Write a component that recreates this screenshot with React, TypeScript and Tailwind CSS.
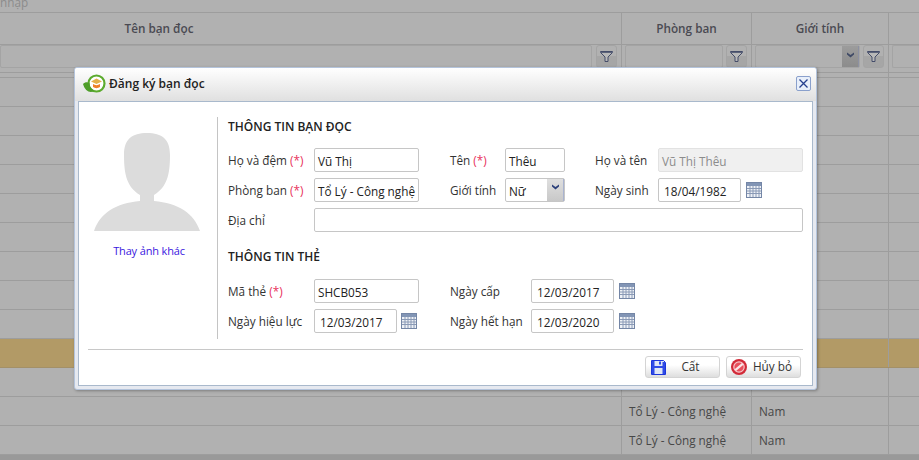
const rowsTop = Array.from({ length: 9 });

function Funnel() {
  return (
    <svg width="13" height="11" viewBox="0 0 13 11" fill="none">
      <path d="M0.5 0.5 H12.5 V1.5 L8 6 V10.5 H5 V6 L0.5 1.5 Z" fill="#b8b8b8" stroke="#454d6a" strokeWidth="1" />
      <path d="M1 1.2 H12" stroke="#454d6a" strokeWidth="1.2" />
    </svg>
  );
}

function FilterBtn() {
  return (
    <div className="w-[21px] h-[23px] rounded-[3px] border border-[#a4a4a4] bg-gradient-to-b from-[#b1b1b1] from-50% to-[#a6a6a6] to-50% flex items-center justify-center shrink-0">
      <Funnel />
    </div>
  );
}

function Calendar() {
  return (
    <svg width="16" height="16" viewBox="0 0 16 16" className="shrink-0">
      <rect x="0.5" y="0.5" width="15" height="15" fill="#eef1f6" stroke="#7486a6" />
      <rect x="1" y="1" width="14" height="3" fill="#8295b5" />
      <path d="M1 6.5H15M1 9H15M1 11.5H15M4 4V15M7 4V15M10 4V15M13 4V15" stroke="#8a9ab6" strokeWidth="1" />
    </svg>
  );
}

function Logo() {
  return (
    <svg width="23" height="19" viewBox="0 0 23 19" className="shrink-0">
      <circle cx="13.5" cy="9.5" r="8" fill="#fff" stroke="#5cab2e" strokeWidth="2.2" />
      <path d="M0 10 C2 7.5 5 8 6.5 9 L7 13 L11 17 C7 19.5 2 17 0 10Z" fill="#4f9e2a" />
      <path d="M8 7.5 L13.5 4.5 L19 7.5 L13.5 10Z" fill="#e3b04a" />
      <path d="M10 10 C12 11.5 15 11.5 17 10 V13 C15 14.5 12 14.5 10 13Z" fill="#ef7f2a" />
    </svg>
  );
}

function Floppy() {
  return (
    <svg width="15" height="15" viewBox="0 0 15 15" className="shrink-0">
      <path d="M0.5 0.5H12.5L14.5 2.5V14.5H0.5Z" fill="#dfe6f6" stroke="#1b35dc" />
      <rect x="1" y="1" width="2.5" height="13" fill="#2f4be6" />
      <rect x="11.5" y="2" width="2.5" height="12" fill="#2f4be6" />
      <rect x="3" y="6" width="9" height="2" fill="#2f4be6" />
      <rect x="8" y="1.5" width="2" height="3" fill="#2f4be6" />
    </svg>
  );
}

function Cancel() {
  return (
    <svg width="16" height="16" viewBox="0 0 16 16" className="shrink-0">
      <circle cx="8" cy="8" r="8" fill="#d22a38" />
      <circle cx="8" cy="8" r="5.2" fill="#e8505c" stroke="#f6c6ca" strokeWidth="1.2" />
      <path d="M4.3 11.2L11.7 4.8" stroke="#fbe6e8" strokeWidth="2.2" />
    </svg>
  );
}

function Label({ text, req, className = "" }: { text: string; req?: boolean; className?: string }) {
  return (
    <div className={"shrink-0 text-[#333] pt-[1px] " + className}>
      {text}
      {req && <span className="text-[#e8305a]"> (*)</span>}
    </div>
  );
}

function Input({ value, className = "" }: { value?: string; className?: string }) {
  return (
    <div className={"h-[24px] rounded-[2px] border border-[#c6c6c6] bg-white px-[3px] pt-[1px] leading-[22px] text-[#222] whitespace-nowrap overflow-hidden shrink-0 " + className}>
      {value}
    </div>
  );
}

function GridCells({ dept, gender }: { dept?: string; gender?: string }) {
  return (
    <>
      <div className="w-[622px] shrink-0 border-r border-[#9d9d9d]" />
      <div className="w-[130px] shrink-0 border-r border-[#9d9d9d] pl-[7px] whitespace-nowrap">{dept}</div>
      <div className="w-[137px] shrink-0 border-r border-[#9d9d9d] pl-[7px]">{gender}</div>
      <div className="flex-1" />
    </>
  );
}

export default function App() {
  return (
    <div className="relative w-[919px] h-[460px] overflow-hidden bg-[#b1b1b1] text-[11.75px] text-[#474747]" style={{ fontFamily: '"Open Sans", "Noto Sans", sans-serif' }}>
      {/* Background grid */}
      <div className="h-[13px] border-b border-[#9d9d9d] leading-[4px] text-[#8c8c8c] overflow-hidden">nhập</div>
      <div className="h-[32px] flex border-b border-[#9d9d9d] font-semibold text-[#4a4a52]">
        <div className="w-[622px] shrink-0 border-r border-[#9d9d9d] flex items-center justify-center pr-[303px]">Tên bạn đọc</div>
        <div className="w-[130px] shrink-0 border-r border-[#9d9d9d] flex items-center justify-center">Phòng ban</div>
        <div className="w-[137px] shrink-0 border-r border-[#9d9d9d] flex items-center justify-center">Giới tính</div>
        <div className="flex-1" />
      </div>
      <div className="h-[28px] flex border-b border-[#9d9d9d]">
        <div className="w-[622px] shrink-0 border-r border-[#9d9d9d] flex gap-[4px] pr-[4px]">
          <div className="flex-1 h-[23px] border border-[#a4a4a4] rounded-[2px]" />
          <FilterBtn />
        </div>
        <div className="w-[130px] shrink-0 border-r border-[#9d9d9d] flex gap-[3px] pl-[3px] pr-[4px]">
          <div className="flex-1 h-[23px] border border-[#a4a4a4] rounded-[2px]" />
          <FilterBtn />
        </div>
        <div className="w-[137px] shrink-0 border-r border-[#9d9d9d] flex gap-[3px] pl-[3px] pr-[4px]">
          <div className="flex-1 h-[23px] border border-[#a4a4a4] rounded-[2px] flex justify-end">
            <div className="w-[17px] h-full bg-gradient-to-b from-[#9c9c9c] to-[#8c8c8c] border-r border-[#8d91a2] flex justify-center pt-[6px]">
              <svg width="9" height="6" viewBox="0 0 9 6"><path d="M1 0.5L4.5 3L8 0.5V2.5L4.5 5.5L1 2.5Z" fill="#3f4a66" /></svg>
            </div>
          </div>
          <FilterBtn />
        </div>
        <div className="flex-1 pl-[3px]">
          <div className="h-[23px] border border-[#a4a4a4] rounded-l-[2px] border-r-0" />
        </div>
      </div>
      <div className="h-[5px] border-b border-[#9d9d9d] flex">
        <GridCells />
      </div>
      {rowsTop.map((_, i) => (
        <div key={i} className="h-[29px] flex border-b border-[#9d9d9d]">
          <GridCells />
        </div>
      ))}
      <div className="h-[29px] flex bg-[#b29a66] border-b border-[#a39068]">
        <GridCells />
      </div>
      <div className="h-[29px] flex border-b border-[#9d9d9d]">
        <GridCells />
      </div>
      {[0, 1].map((i) => (
        <div key={i} className="h-[29px] flex border-b border-[#9d9d9d] leading-[29px]">
          <GridCells dept="Tổ Lý - Công nghệ" gender="Nam" />
        </div>
      ))}
      <div className="h-[5px] bg-[#999999]" />

      {/* Dialog */}
      <div className="absolute left-[74px] top-[67px] w-[743px] h-[323px] rounded-[3px] border border-[#b4c4dc] bg-[#e6e9f0] shadow-[1px_1px_3px_rgba(0,0,0,0.3)] flex flex-col overflow-hidden">
        <div className="h-[33px] flex items-center shrink-0 pl-[8px] pr-[5px] pb-[2px] bg-gradient-to-b from-[#ffffff] to-[#e0e0e0]">
          <Logo />
          <div className="ml-[3px] font-semibold text-[#222] text-[12px]">Đăng ký bạn đọc</div>
          <div className="ml-auto w-[15px] h-[15px] rounded-[2px] border border-[#8aa0cc] bg-[#e8effa] flex items-center justify-center">
            <svg width="9" height="9" viewBox="0 0 9 9"><path d="M0.5 0.5L8.5 8.5M8.5 0.5L0.5 8.5" stroke="#25408f" strokeWidth="1.3" /></svg>
          </div>
        </div>
        <div className="flex-1 mx-[3px] mb-[3px] bg-white border border-[#a9b9cc] flex flex-col px-[9px] overflow-hidden">
          <div className="flex mt-[15px] h-[222px]">
            <div className="w-[130px] border-r border-[#c4c4c4] shrink-0 flex flex-col pl-[5px] pr-[16px] items-center">
              <svg width="106" height="98" viewBox="0 0 106 98" className="mt-[16px] shrink-0">
                <path d="M53 0 C38 0 30 6 30 22 C30 42 33 54 46 62 V68 C22 70 6 80 0 98 H106 C100 80 84 70 60 68 V62 C73 54 76 42 76 22 C76 6 68 0 53 0Z" fill="#dcdcdc" />
              </svg>
              <div className="mt-[12px] ml-[4px] text-[#3a18e0] whitespace-nowrap text-[11px] tracking-[-0.15px]">Thay ảnh khác</div>
            </div>
            <div className="flex-1 pl-[10px] flex flex-col">
              <div className="h-[20px] font-semibold text-[#222] leading-[20px] text-[12px]">THÔNG TIN BẠN ĐỌC</div>
              <div className="flex items-center mt-[11px]">
                <Label text="Họ và đệm" req className="w-[86px]" />
                <Input value="Vũ Thị" className="w-[105px]" />
                <Label text="Tên" req className="w-[55px] ml-[31px]" />
                <Input value="Thêu" className="w-[60px]" />
                <Label text="Họ và tên" className="w-[63px] ml-[30px]" />
                <Input value="Vũ Thị Thêu" className="w-[145px] !bg-[#f0f0f0] !border-[#e2e2e2] !text-[#8c8c8c]" />
              </div>
              <div className="flex items-center mt-[6px]">
                <Label text="Phòng ban" req className="w-[86px]" />
                <Input value="Tổ Lý - Công nghệ" className="w-[105px]" />
                <Label text="Giới tính" className="w-[55px] ml-[31px]" />
                <div className="w-[60px] h-[24px] rounded-[2px] border border-[#c6c6c6] flex shrink-0">
                  <div className="flex-1 px-[3px] pt-[1px] leading-[22px] text-[#222]">Nữ</div>
                  <div className="w-[17px] bg-gradient-to-b from-[#dfdfdf] to-[#c8c8c8] border-r border-[#a9b3d0] flex justify-center pt-[5px]">
                    <svg width="9" height="6" viewBox="0 0 9 6"><path d="M1 0.5L4.5 3L8 0.5V2.5L4.5 5.5L1 2.5Z" fill="#2b3f7a" /></svg>
                  </div>
                </div>
                <Label text="Ngày sinh" className="w-[63px] ml-[30px]" />
                <Input value="18/04/1982" className="w-[83px] !px-[5px]" />
                <div className="ml-[5px]"><Calendar /></div>
              </div>
              <div className="flex items-center mt-[6px]">
                <Label text="Địa chỉ" className="w-[86px]" />
                <Input className="w-[489px]" />
              </div>
              <div className="h-[20px] mt-[15px] font-semibold text-[#222] leading-[20px] text-[12px]">THÔNG TIN THẺ</div>
              <div className="flex items-center mt-[12px]">
                <Label text="Mã thẻ" req className="w-[86px]" />
                <Input value="SHCB053" className="w-[105px]" />
                <Label text="Ngày cấp" className="w-[81px] ml-[31px]" />
                <Input value="12/03/2017" className="w-[83px] !px-[5px]" />
                <div className="ml-[5px]"><Calendar /></div>
              </div>
              <div className="flex items-center mt-[6px]">
                <Label text="Ngày hiệu lực" className="w-[86px]" />
                <Input value="12/03/2017" className="w-[83px] !px-[5px]" />
                <div className="ml-[4px]"><Calendar /></div>
                <Label text="Ngày hết hạn" className="w-[81px] ml-[33px]" />
                <Input value="12/03/2020" className="w-[83px] !px-[5px]" />
                <div className="ml-[5px]"><Calendar /></div>
              </div>
            </div>
          </div>
          <div className="mt-[10px] h-px bg-[#c8c8c8] shrink-0" />
          <div className="flex justify-end gap-[6px] mt-[6px] pr-[2px]">
            <div className="w-[75px] h-[22px] rounded-[3px] border border-[#d4d4d4] bg-gradient-to-b from-[#ffffff] from-40% to-[#dedede] flex items-center pl-[5px] text-[#333]">
              <Floppy />
              <div className="flex-1 text-center pr-[4px]">Cất</div>
            </div>
            <div className="w-[75px] h-[22px] rounded-[3px] border border-[#d4d4d4] bg-gradient-to-b from-[#ffffff] from-40% to-[#dedede] flex items-center pl-[4px] text-[#333]">
              <Cancel />
              <div className="flex-1 text-center pr-[2px]">Hủy bỏ</div>
            </div>
          </div>
        </div>
      </div>
    </div>
  );
}
